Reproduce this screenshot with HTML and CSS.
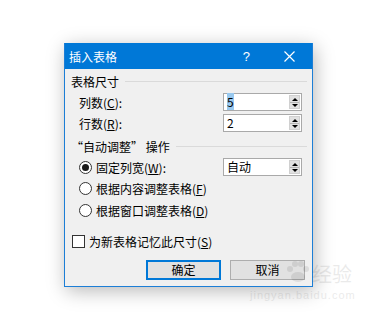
FILE: index.html
```html
<!DOCTYPE html>
<html lang="zh-CN">
<head>
    <meta charset="UTF-8">
    <title>插入表格</title>
    <link rel="stylesheet" href="styles.css">
</head>
<body>
    <div class="dialog">
        <div class="titlebar">
            <span class="title">插入表格</span>
            <span class="help">?</span>
            <svg class="close" width="11" height="11" viewBox="0 0 11 11">
                <path d="M0.5 0.5 L10.5 10.5 M10.5 0.5 L0.5 10.5" stroke="#fff" stroke-width="1.2"/>
            </svg>
        </div>
        <div class="content">
            <div class="group">
                <span>表格尺寸</span>
                <span class="rule"></span>
            </div>
            <div class="row field first">
                <span>列数(<u>C</u>):</span>
                <div class="spin">
                    <span class="value"><span class="sel">5</span></span>
                    <span class="arrows"><i class="up"></i><i class="down"></i></span>
                </div>
            </div>
            <div class="row field">
                <span>行数(<u>R</u>):</span>
                <div class="spin">
                    <span class="value">2</span>
                    <span class="arrows"><i class="up"></i><i class="down"></i></span>
                </div>
            </div>
            <div class="group second">
                <span>“自动调整” 操作</span>
                <span class="rule"></span>
            </div>
            <div class="row field first">
                <span class="opt"><span class="radio checked"></span>固定列宽(<u>W</u>):</span>
                <div class="spin">
                    <span class="value">自动</span>
                    <span class="arrows"><i class="up"></i><i class="down"></i></span>
                </div>
            </div>
            <div class="row field radio-row">
                <span class="opt"><span class="radio"></span>根据内容调整表格(<u>F</u>)</span>
            </div>
            <div class="row field radio-row">
                <span class="opt"><span class="radio"></span>根据窗口调整表格(<u>D</u>)</span>
            </div>
            <div class="row check-row">
                <span class="opt"><span class="check"></span>为新表格记忆此尺寸(<u>S</u>)</span>
            </div>
            <div class="buttons">
                <button class="btn default">确定</button>
                <button class="btn">取消</button>
            </div>
        </div>
    </div>
    <!-- faint watermark over the corner -->
    <svg class="wm-paw" width="26" height="24" viewBox="0 0 26 24">
        <circle cx="5" cy="9" r="3" fill="#000"/>
        <circle cx="10" cy="4" r="3" fill="#000"/>
        <circle cx="16" cy="4" r="3" fill="#000"/>
        <circle cx="21" cy="9" r="3" fill="#000"/>
        <ellipse cx="13" cy="17" rx="7" ry="5" fill="#000"/>
    </svg>
    <div class="wm-logo">经验</div>
    <div class="wm-url">jingyan.baidu.com</div>
</body>
</html>
```
FILE: styles.css
```css
body {
    margin: 0;
    width: 365px;
    height: 312px;
    background: #ffffff;
    font-family: "Noto Sans CJK SC", "Liberation Sans", sans-serif;
    font-size: 12px;
    color: #000;
    overflow: hidden;
    position: relative;
}

.dialog {
    margin: 43px 0 0 64px;
    width: 249px;
    box-sizing: border-box;
    border: 1px solid #1c7ed6;
    border-top: none;
    background: #f0f0f0;
    box-shadow: 2px 4px 18px rgba(0, 0, 0, 0.28);
}

.titlebar {
    height: 26px;
    background: #0078d7;
    color: #fff;
    display: flex;
    align-items: center;
    padding-left: 4px;
}

.title {
    font-size: 12px;
    flex: 1;
}

.help {
    font-family: "Liberation Sans", sans-serif;
    font-size: 13px;
    margin-right: 34px;
}

.close {
    margin-right: 17px;
}

.content {
    padding: 3px 10px 6px 6px;
}

.group {
    display: flex;
    align-items: center;
    height: 18px;
}

.group.second {
    margin-top: 5px;
}

.rule {
    flex: 1;
    height: 1px;
    background: #dadada;
    margin-left: 6px;
    margin-right: -5px;
}

.row {
    display: flex;
    align-items: center;
    height: 18px;
    margin-top: 3px;
    padding-left: 8px;
}

.row.radio-row {
    margin-top: 3px;
}

.row.radio-row:nth-of-type(7) {
    margin-top: 4px;
}

.row.check-row {
    margin-top: 13px;
    padding-left: 1px;
}

.field > span:first-child {
    flex: 1;
}

.opt {
    display: flex;
    align-items: center;
}

.spin {
    width: 79px;
    height: 18px;
    box-sizing: border-box;
    border: 1px solid #a9a9a9;
    background: #fff;
    display: flex;
    align-items: center;
}

.value {
    flex: 1;
    padding-left: 3px;
    line-height: 16px;
}

.sel {
    background: #99c9ef;
}

.arrows {
    width: 11px;
    height: 14px;
    margin-right: 1px;
    display: flex;
    flex-direction: column;
    background: #e1e1e1;
    border: 1px solid #d0d0d0;
    box-sizing: border-box;
}

.arrows i {
    flex: 1;
    position: relative;
}

.arrows i.up {
    border-bottom: 1px solid #b5b5b5;
}

.arrows i::after {
    content: "";
    position: absolute;
    left: 2px;
    top: 2px;
    border-left: 3px solid transparent;
    border-right: 3px solid transparent;
}

.arrows i.up::after {
    border-bottom: 3px solid #000;
}

.arrows i.down::after {
    top: 1px;
    border-top: 3px solid #000;
}

.radio {
    width: 13px;
    height: 13px;
    box-sizing: border-box;
    border: 1px solid #333;
    border-radius: 50%;
    background: #fff;
    margin-right: 4px;
    position: relative;
}

.radio.checked::after {
    content: "";
    position: absolute;
    left: 2px;
    top: 2px;
    width: 7px;
    height: 7px;
    border-radius: 50%;
    background: #1a1a1a;
}

.check {
    width: 13px;
    height: 13px;
    box-sizing: border-box;
    border: 1px solid #333;
    background: #fff;
    margin-right: 4px;
}

.buttons {
    display: flex;
    justify-content: flex-end;
    gap: 9px;
    margin-top: 10px;
    margin-right: -3px;
}

.btn {
    width: 75px;
    height: 20px;
    box-sizing: border-box;
    background: #e1e1e1;
    border: 1px solid #adadad;
    font-family: "Noto Sans CJK SC", sans-serif;
    font-size: 12px;
    padding: 0;
    line-height: 16px;
}

.btn.default {
    border: 2px solid #0078d7;
}

.wm-paw {
    position: absolute;
    left: 285px;
    top: 260px;
    opacity: 0.08;
}

.wm-logo {
    position: absolute;
    left: 312px;
    top: 262px;
    font-size: 20px;
    line-height: 24px;
    color: #000;
    opacity: 0.08;
}

.wm-url {
    position: absolute;
    left: 250px;
    top: 289px;
    font-family: "Liberation Sans", sans-serif;
    font-size: 11px;
    letter-spacing: 1px;
    color: #000;
    opacity: 0.08;
}
```
